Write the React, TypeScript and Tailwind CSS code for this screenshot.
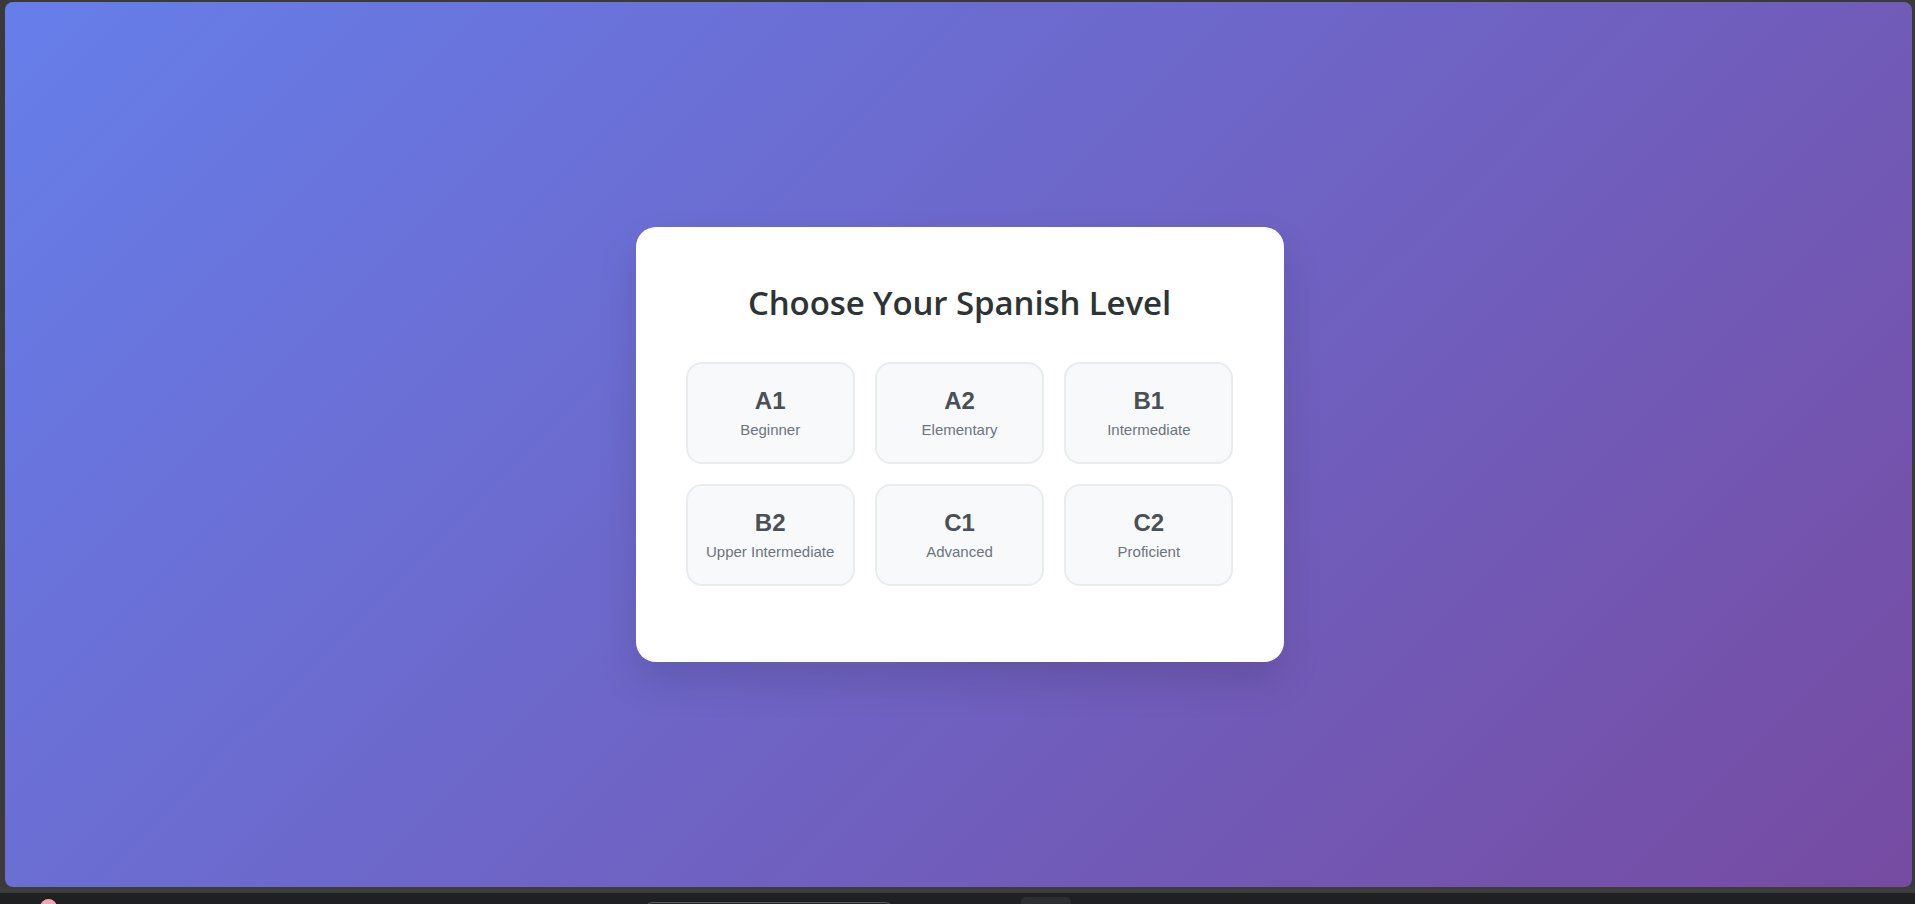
import React from "react";

const levels = [
  { code: "A1", name: "Beginner" },
  { code: "A2", name: "Elementary" },
  { code: "B1", name: "Intermediate" },
  { code: "B2", name: "Upper Intermediate" },
  { code: "C1", name: "Advanced" },
  { code: "C2", name: "Proficient" },
];

export default function App() {
  return (
    <div className="w-full h-[904px] overflow-hidden bg-[#3a3a3a] flex flex-col">
      <div className="mt-[2px] ml-[5px] mr-[3px] h-[885px] rounded-[8px] bg-[linear-gradient(135deg,#667eea_0%,#764ba2_100%)] flex items-center justify-center">
        <div className="ml-[2px] w-[648px] h-[435px] bg-white rounded-[20px] shadow-[0_20px_40px_rgba(0,0,0,0.12)] px-[50px] pt-[56px] flex flex-col items-center">
          <h1 className="text-[33px] leading-[40px] font-semibold text-[#2d3436] font-['Open_Sans','Noto_Sans',sans-serif] mb-[39px] tracking-[-0.1px]">
            Choose Your Spanish Level
          </h1>
          <div className="grid grid-cols-3 gap-[20px] w-[548px]">
            {levels.map((l) => (
              <button
                key={l.code}
                className="h-[102px] rounded-[16px] border-2 border-[#e9ecef] bg-[#f8f9fa] flex flex-col items-center pt-[23px] font-['Liberation_Sans',Arial,sans-serif]"
              >
                <span className="text-[24px] leading-[28px] font-bold text-[#495057]">{l.code}</span>
                <span className="mt-[6px] text-[15px] leading-[18px] text-[#6c757d]">{l.name}</span>
              </button>
            ))}
          </div>
        </div>
      </div>
      <div className="h-[6px] bg-[#3d3d3d]" />
      <div className="relative flex-1 bg-[#1f2022] overflow-hidden">
        <div className="absolute left-[40px] top-[6px] w-[17px] h-[17px] rounded-full bg-[#f3a5b1]" />
        <div className="absolute left-[643px] top-[9px] w-[252px] h-[20px] rounded-full border border-[#5a5a5a] bg-[#26272a]" />
        <div className="absolute left-[1021px] top-[4px] w-[50px] h-[20px] rounded-[5px] bg-[#2d2e30]" />
      </div>
    </div>
  );
}
